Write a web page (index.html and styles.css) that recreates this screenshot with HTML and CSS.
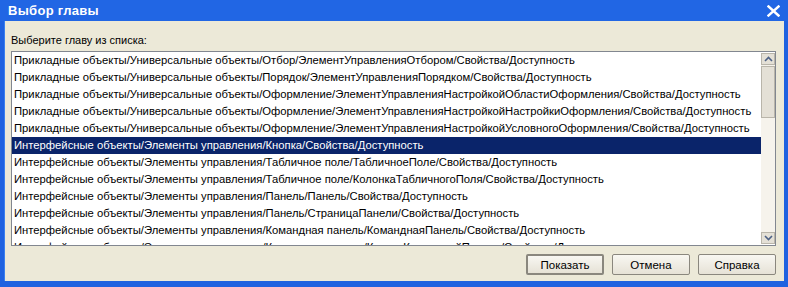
FILE: index.html
```html
<!DOCTYPE html>
<html>
<head>
<meta charset="utf-8">
<link rel="stylesheet" href="styles.css">
</head>
<body>
<div class="window">
  <div class="titlebar">
    <span class="title">Выбор главы</span>
    <svg class="close" width="13" height="12" viewBox="0 0 13 12"><path d="M1.5 1.5 L11.5 10.5 M11.5 1.5 L1.5 10.5" stroke="#fff" stroke-width="2.4" stroke-linecap="square"/></svg>
  </div>
  <div class="content">
    <div class="label">Выберите главу из списка:</div>
    <div class="listbox">
      <div class="items">
        <div class="row">Прикладные объекты/Универсальные объекты/Отбор/ЭлементУправленияОтбором/Свойства/Доступность</div>
        <div class="row">Прикладные объекты/Универсальные объекты/Порядок/ЭлементУправленияПорядком/Свойства/Доступность</div>
        <div class="row">Прикладные объекты/Универсальные объекты/Оформление/ЭлементУправленияНастройкойОбластиОформления/Свойства/Доступность</div>
        <div class="row">Прикладные объекты/Универсальные объекты/Оформление/ЭлементУправленияНастройкойНастройкиОформления/Свойства/Доступность</div>
        <div class="row">Прикладные объекты/Универсальные объекты/Оформление/ЭлементУправленияНастройкойУсловногоОформления/Свойства/Доступность</div>
        <div class="row selected">Интерфейсные объекты/Элементы управления/Кнопка/Свойства/Доступность</div>
        <div class="row">Интерфейсные объекты/Элементы управления/Табличное поле/ТабличноеПоле/Свойства/Доступность</div>
        <div class="row">Интерфейсные объекты/Элементы управления/Табличное поле/КолонкаТабличногоПоля/Свойства/Доступность</div>
        <div class="row">Интерфейсные объекты/Элементы управления/Панель/Панель/Свойства/Доступность</div>
        <div class="row">Интерфейсные объекты/Элементы управления/Панель/СтраницаПанели/Свойства/Доступность</div>
        <div class="row">Интерфейсные объекты/Элементы управления/Командная панель/КоманднаяПанель/Свойства/Доступность</div>
        <div class="row">Интерфейсные объекты/Элементы управления/Командная панель/КнопкаКоманднойПанели/Свойства/Доступность</div>
      </div>
      <div class="scrollbar">
        <div class="sbtn"><svg width="9" height="6" viewBox="0 0 9 6"><path d="M1 5 L4.5 1.5 L8 5" fill="none" stroke="#4d6185" stroke-width="1.6"/></svg></div>
        <div class="track"><div class="thumb"></div></div>
        <div class="sbtn"><svg width="9" height="6" viewBox="0 0 9 6"><path d="M1 1 L4.5 4.5 L8 1" fill="none" stroke="#4d6185" stroke-width="1.6"/></svg></div>
      </div>
    </div>
    <div class="buttons">
      <button class="btn default">Показать</button>
      <button class="btn">Отмена</button>
      <button class="btn">Справка</button>
    </div>
  </div>
</div>
</body>
</html>
```
FILE: styles.css
```css
html, body {
  margin: 0;
  padding: 0;
  background: #1f62e0;
}
.window {
  width: 788px;
  height: 287px;
  box-sizing: border-box;
  display: flex;
  flex-direction: column;
  background: #1f62e0;
  padding: 0 4px 6px 4px;
  font-family: "Liberation Sans", Arial, sans-serif;
}
.titlebar {
  height: 22px;
  display: flex;
  align-items: center;
  justify-content: space-between;
  background: #2166e4;
  margin: 0 -4px;
  padding-left: 8px;
  padding-right: 8px;
}
.title {
  color: #fff;
  font-weight: bold;
  font-size: 13px;
  font-family: "Liberation Sans", Arial, sans-serif;
  letter-spacing: 0.3px;
}
.close {
  display: block;
}
.content {
  flex: 1;
  background: #ece9d8;
  display: flex;
  flex-direction: column;
  padding: 12px 8px 6px 7px;
  box-shadow: inset 1px 0 0 #3a80f0;
}
.label {
  font-size: 11px;
  line-height: 14px;
  height: 14px;
  color: #000;
  margin-bottom: 4px;
}
.listbox {
  height: 195px;
  box-sizing: border-box;
  border: 1px solid #828790;
  background: #fff;
  display: flex;
  overflow: hidden;
}
.items {
  flex: 1;
  overflow: hidden;
}
.row {
  height: 17px;
  line-height: 17px;
  font-size: 11.25px;
  padding-left: 2px;
  white-space: nowrap;
  color: #000;
}
.row.selected {
  background: #0a246a;
  color: #fff;
}
.scrollbar {
  width: 14px;
  margin: 1px 0 1px 0;
  display: flex;
  flex-direction: column;
  background: #f5f2ea;
}
.sbtn {
  height: 12px;
  box-sizing: border-box;
  background: #e4e0d6;
  border: 1px solid #b9b5aa;
  display: flex;
  align-items: center;
  justify-content: center;
}
.track {
  flex: 1;
  background: #f6f3ec;
  padding-top: 1px;
}
.thumb {
  height: 52px;
  box-sizing: border-box;
  background: #e4e0d6;
  border: 1px solid #b9b5aa;
}
.buttons {
  margin-top: 8px;
  display: flex;
  justify-content: flex-end;
  gap: 8px;
}
.btn {
  width: 78px;
  height: 21px;
  box-sizing: border-box;
  font-family: "Liberation Sans", Arial, sans-serif;
  font-size: 11.5px;
  color: #000;
  background: linear-gradient(#f8f7f2, #e6e2d6);
  border: 1px solid #8a877e;
  border-radius: 2px;
  padding: 0;
}
.btn.default {
  border: 2px solid #8a877e;
}
```
